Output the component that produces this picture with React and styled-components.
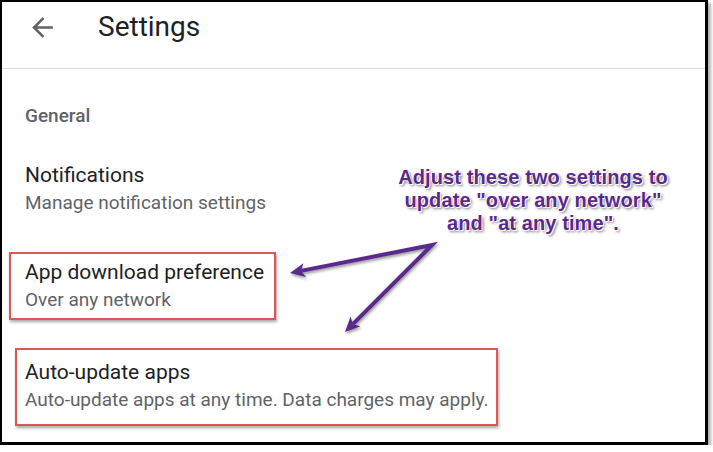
import styled, { createGlobalStyle } from "styled-components";

const GlobalStyle = createGlobalStyle`
  html, body {
    margin: 0;
    padding: 0;
    background: #ffffff;
  }
  body {
    font-family: Roboto, "Noto Sans", Arial, sans-serif;
  }
`;

const Frame = styled.div`
  position: relative;
  box-sizing: border-box;
  width: 708px;
  height: 445px;
  background: #ffffff;
  border-style: solid;
  border-color: #000000;
  border-width: 2px 3px 3px 2px;
  box-shadow: 3px 3px 3px rgba(0, 0, 0, 0.3);
  overflow: hidden;
`;

const Header = styled.div`
  height: 66px;
  display: flex;
  align-items: center;
  padding-left: 25px;
  border-bottom: 1px solid #dadce0;
`;

const BackButton = styled.div`
  width: 31px;
  height: 31px;
  display: flex;
  margin-top: -16px;
  color: #5f6368;
`;

const Title = styled.h1`
  margin: -16px 0 0 40px;
  font-size: 28px;
  font-weight: 400;
  color: #202124;
  line-height: 34px;
`;

const Content = styled.div`
  display: flex;
  flex-direction: column;
  align-items: flex-start;
`;

const SectionLabel = styled.div`
  margin-top: 35px;
  padding-left: 23px;
  font-size: 19px;
  font-weight: 500;
  line-height: 24px;
  color: #5f6368;
`;

const Item = styled.div`
  box-sizing: border-box;
  margin-top: ${(p) => p.$gap}px;
  ${(p) =>
    p.$box
      ? `
    margin-left: ${p.$box.left}px;
    width: ${p.$box.width}px;
    padding: ${p.$box.top}px 0 ${p.$box.bottom}px ${p.$box.pad}px;
    border: 2px solid #e05555;
    box-shadow: 1px 2px 3px rgba(0, 0, 0, 0.35);
  `
      : `
    padding-left: 23px;
  `}
`;

const ItemTitle = styled.div`
  font-size: 21px;
  line-height: 26px;
  color: #202124;
`;

const ItemSub = styled.div`
  margin-top: 3px;
  font-size: 19px;
  line-height: 24px;
  color: #5f6368;
`;

const Note = styled.div`
  position: absolute;
  left: 371px;
  top: 164px;
  width: 320px;
  text-align: center;
  font-family: "Liberation Sans", Arial, sans-serif;
  font-weight: 700;
  font-size: 20px;
  line-height: 23px;
  letter-spacing: 0.1px;
  color: #5a2a8a;
  text-shadow: 0 0 1px #fff, 1px 1px 0 #fff, -1px -1px 0 #fff,
    2px 2px 3px rgba(0, 0, 0, 0.55);
`;

const Arrows = styled.svg`
  position: absolute;
  left: -2px;
  top: -2px;
  pointer-events: none;
  filter: drop-shadow(1px 2px 1.5px rgba(0, 0, 0, 0.4));
`;

function ArrowBack() {
  return (
    <svg width="31" height="31" viewBox="0 0 24 24" fill="currentColor">
      <path d="M20 11H7.83l5.59-5.59L12 4l-8 8 8 8 1.41-1.41L7.83 13H20v-2z" />
    </svg>
  );
}

function SettingItem({ title, subtitle, gap, box }) {
  return (
    <Item $gap={gap} $box={box}>
      <ItemTitle>{title}</ItemTitle>
      <ItemSub>{subtitle}</ItemSub>
    </Item>
  );
}

export default function App() {
  return (
    <>
      <GlobalStyle />
      <Frame>
        <Header>
          <BackButton>
            <ArrowBack />
          </BackButton>
          <Title>Settings</Title>
        </Header>
        <Content>
          <SectionLabel>General</SectionLabel>
          <SettingItem
            gap={34}
            title="Notifications"
            subtitle="Manage notification settings"
          />
          <SettingItem
            gap={37}
            title="App download preference"
            subtitle="Over any network"
            box={{ left: 7, width: 267, top: 5, bottom: 6, pad: 14 }}
          />
          <SettingItem
            gap={28}
            title="Auto-update apps"
            subtitle="Auto-update apps at any time. Data charges may apply."
            box={{ left: 13, width: 483, top: 9, bottom: 12, pad: 8 }}
          />
        </Content>
        <Note>
          Adjust these two settings to
          <br />
          update "over any network"
          <br />
          and "at any time".
        </Note>
        <Arrows width="713" height="452" viewBox="0 0 713 452">
          <polyline
            points="300.8,270.9 432,245 352.8,324.2"
            fill="none"
            stroke="#5a2a8e"
            strokeWidth="4"
            strokeLinejoin="miter"
          />
          <polygon
            points="290,273 303.4,263.2 300.8,270.9 306.1,277"
            fill="#5a2a8e"
          />
          <polygon
            points="345,332 350.6,316.4 352.8,324.2 360.5,326.3"
            fill="#5a2a8e"
          />
        </Arrows>
      </Frame>
    </>
  );
}
